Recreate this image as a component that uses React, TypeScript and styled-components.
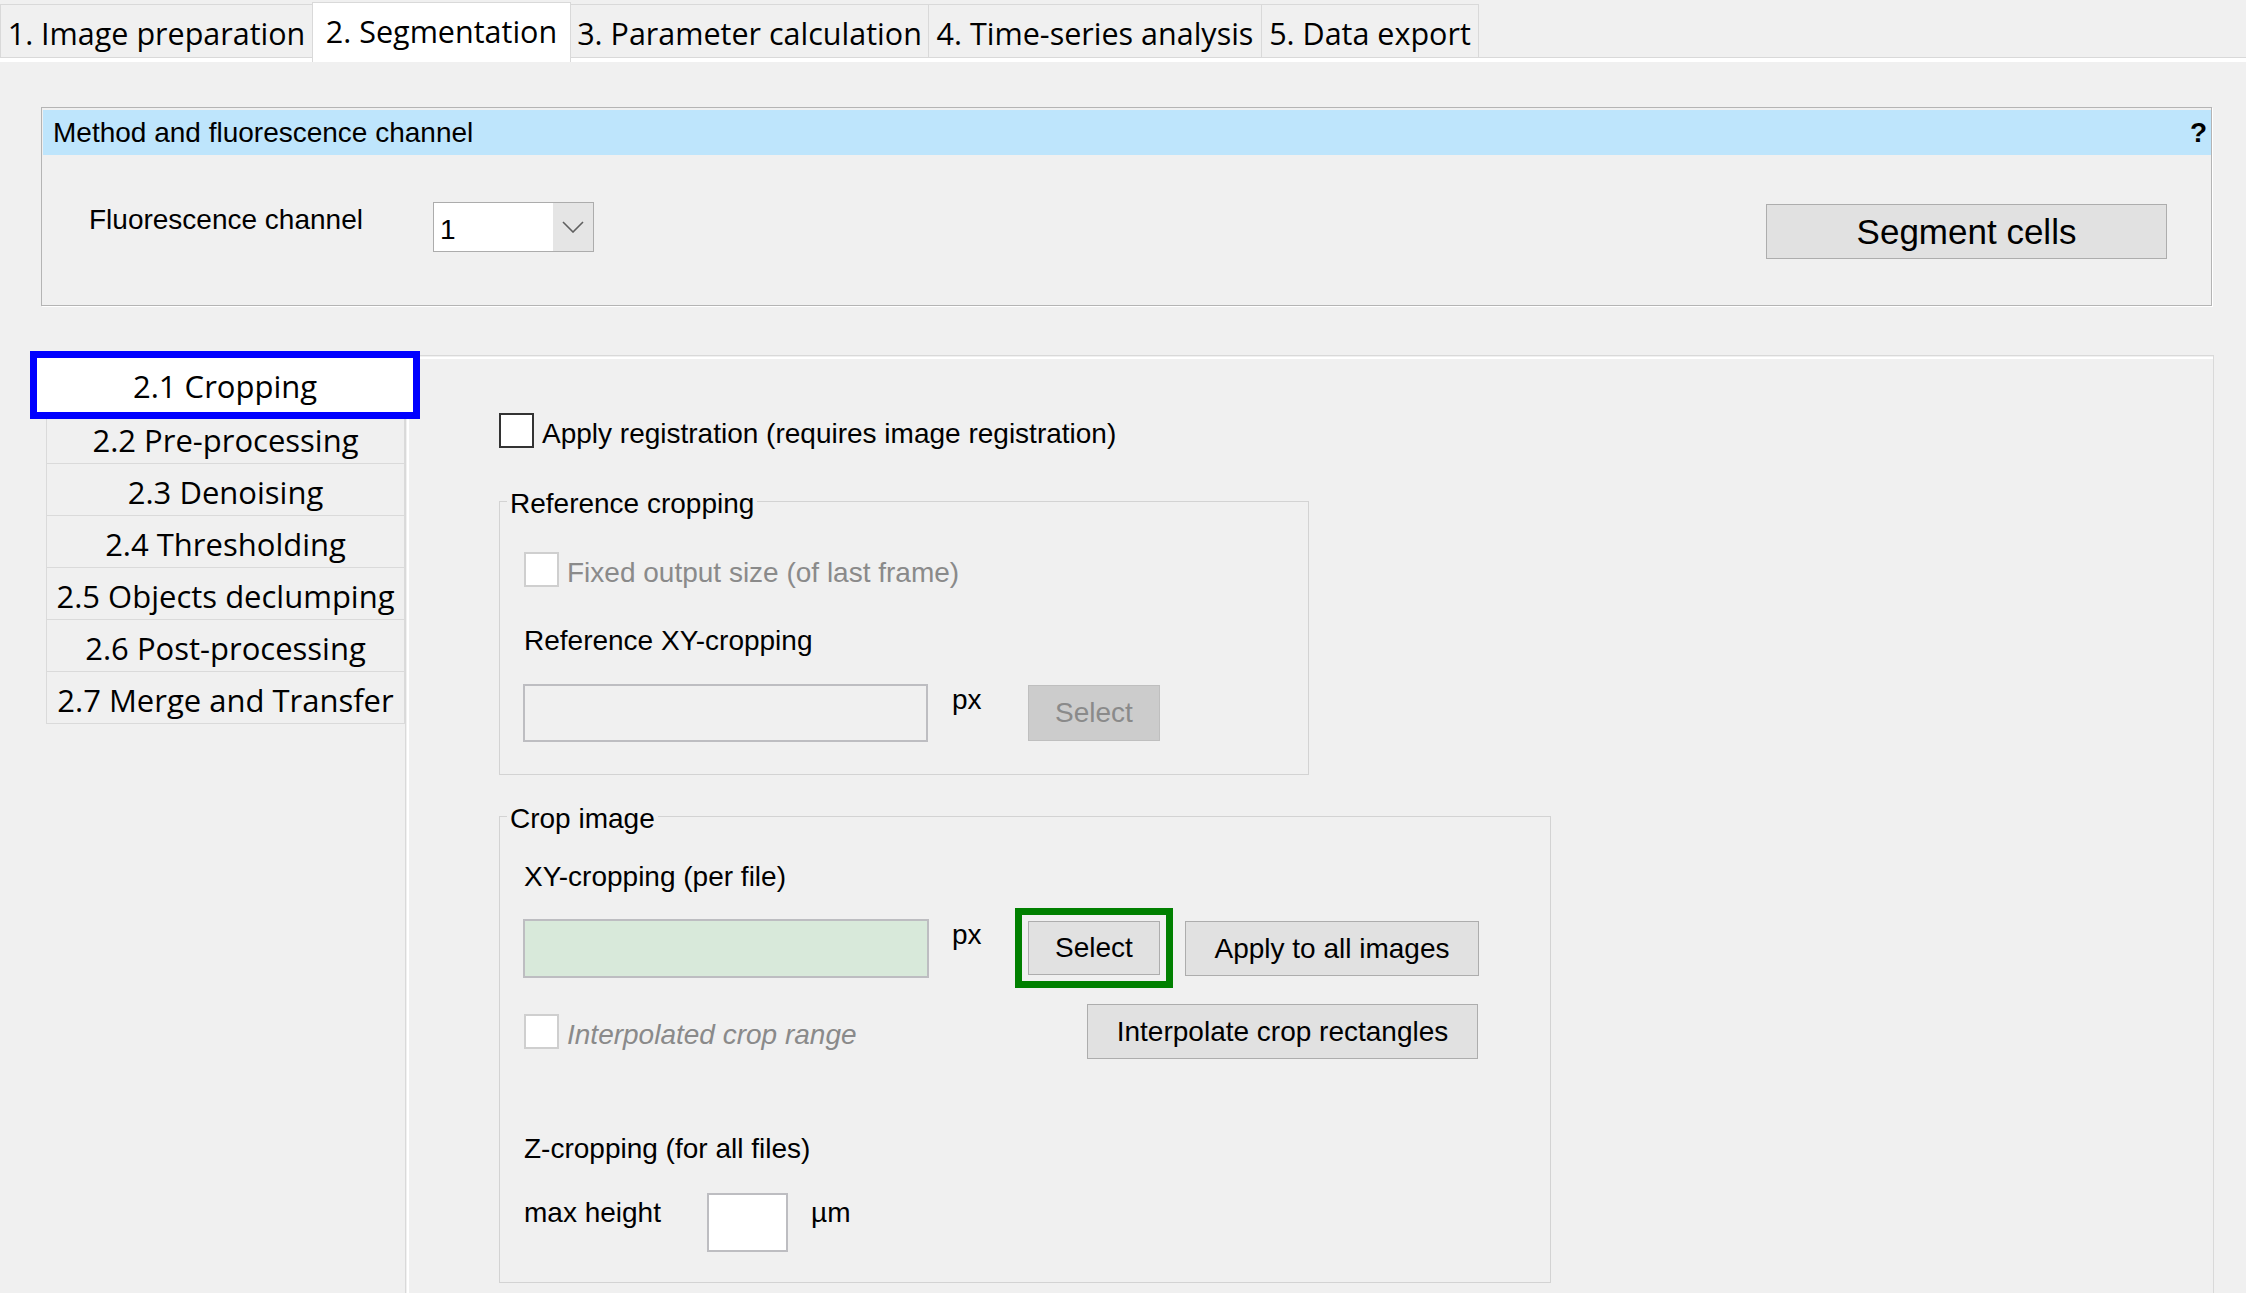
import React from "react";
import styled, { createGlobalStyle, css } from "styled-components";

const GlobalStyle = createGlobalStyle`
  html, body { margin: 0; padding: 0; background: #f0f0f0; }
  body {
    font-family: "Liberation Sans", Arial, sans-serif;
    color: #000;
    overflow: hidden;
  }
  * { box-sizing: border-box; }
`;

const Window = styled.div`
  display: flex;
  flex-direction: column;
  width: 100vw;
  height: 100vh;
  background: #f0f0f0;
  overflow: hidden;
`;

const TabBar = styled.div`
  display: flex;
  align-items: flex-start;
  height: 58px;
  flex-shrink: 0;
  border-bottom: 1px solid #d9d9d9;
`;

const Tab = styled.div<{ $active?: boolean; $w: number }>`
  width: ${(p) => p.$w}px;
  flex-shrink: 0;
  margin-right: -1px;
  font-family: "Open Sans", "Noto Sans", sans-serif;
  font-size: 30.5px;
  line-height: 40px;
  text-align: center;
  white-space: nowrap;
  border: 1px solid #d9d9d9;
  border-bottom: none;
  ${(p) =>
    p.$active
      ? css`
          position: relative;
          z-index: 1;
          margin-top: 2px;
          height: 60px;
          padding-top: 8px;
          background: #ffffff;
        `
      : css`
          margin-top: 4px;
          height: 53px;
          padding-top: 8px;
          background: #f0f0f0;
        `}
`;

const PageArea = styled.div`
  flex: 1;
  min-height: 0;
  display: flex;
  flex-direction: column;
  border-top: 4px solid #ffffff;
  padding: 45px 32px 0 41px;
`;

const MethodPanel = styled.section`
  flex-shrink: 0;
  margin-right: 2px;
  border: 1px solid #b4b4b4;
  padding: 2px 0 0 1px;
  box-shadow: 1px 1px 0 #ffffff;
  display: flex;
  flex-direction: column;
`;

const PanelHeader = styled.div`
  height: 45px;
  background: #bee5fc;
  display: flex;
  align-items: center;
  justify-content: space-between;
  padding: 0 4px 0 10px;
  font-size: 28px;
  line-height: 32px;
`;

const HelpMark = styled.span`
  font-weight: bold;
`;

const PanelBody = styled.div`
  height: 150px;
  display: flex;
  align-items: flex-start;
  padding: 0 44px 0 46px;
`;

const FieldLabel = styled.span<{ $w?: number; $top?: number }>`
  ${(p) => (p.$w ? `width: ${p.$w}px;` : "")}
  flex-shrink: 0;
  margin-top: ${(p) => p.$top ?? 0}px;
  font-size: 28px;
  line-height: 32px;
  white-space: nowrap;
`;

const Dropdown = styled.div`
  width: 161px;
  height: 50px;
  margin-top: 47px;
  display: flex;
  border: 1px solid #acacac;
  background: #ffffff;
`;

const DropdownValue = styled.span`
  flex: 1;
  padding: 11px 0 0 6px;
  font-size: 28px;
  line-height: 32px;
`;

const DropdownArrow = styled.span`
  width: 40px;
  display: flex;
  align-items: center;
  justify-content: center;
  background: #e5e5e5;
`;

const PushButton = styled.button<{
  $w: number;
  $h: number;
  $size?: number;
  $top?: number;
  $gap?: number;
  $auto?: boolean;
  $highlight?: boolean;
}>`
  width: ${(p) => p.$w}px;
  height: ${(p) => p.$h}px;
  flex-shrink: 0;
  margin-top: ${(p) => p.$top ?? 0}px;
  margin-left: ${(p) => (p.$auto ? "auto" : `${p.$gap ?? 0}px`)};
  padding: 0;
  font-family: "Liberation Sans", Arial, sans-serif;
  font-size: ${(p) => p.$size ?? 28}px;
  line-height: 1;
  color: #000000;
  background: #e1e1e1;
  border: 1px solid #adadad;
  white-space: nowrap;
  ${(p) =>
    p.$highlight &&
    css`
      outline: 7px solid #008000;
      outline-offset: 6px;
    `}
  &:disabled {
    color: #8a8a8a;
    background: #cccccc;
    border-color: #bfbfbf;
  }
`;

const Workspace = styled.div`
  flex: 1;
  min-height: 0;
  display: flex;
  margin-top: 49px;
`;

const SideList = styled.nav`
  width: 359px;
  flex-shrink: 0;
  margin-left: 5px;
  padding-top: 3px;
  display: flex;
  flex-direction: column;
  align-items: stretch;
`;

const SideItem = styled.div<{ $selected?: boolean }>`
  display: flex;
  align-items: center;
  justify-content: center;
  font-family: "Open Sans", "Noto Sans", sans-serif;
  font-size: 31px;
  line-height: 40px;
  white-space: nowrap;
  ${(p) =>
    p.$selected
      ? css`
          position: relative;
          z-index: 1;
          height: 54px;
          margin: 0 -8px 0 -9px;
          padding-top: 2px;
          background: #ffffff;
          outline: 7px solid #0000ff;
        `
      : css`
          height: 52px;
          padding-top: 5px;
          border: 1px solid #dadada;
          border-top: none;
        `}
`;

const ContentPanel = styled.div`
  flex: 1;
  display: flex;
  flex-direction: column;
  align-items: flex-start;
  border: 1px solid #d9d9d9;
  border-bottom: none;
  box-shadow: inset 1px 1px 0 #f0f0f0, inset 3px 3px 0 #ffffff;
  padding: 57px 0 0 93px;
`;

const CheckRow = styled.label`
  display: flex;
  align-items: center;
  height: 35px;
  flex-shrink: 0;
`;

const CheckBox = styled.span<{ $disabled?: boolean }>`
  width: 35px;
  height: 35px;
  flex-shrink: 0;
  background: #ffffff;
  border: 2px solid ${(p) => (p.$disabled ? "#cfcfcf" : "#333333")};
`;

const CheckText = styled.span<{ $disabled?: boolean; $italic?: boolean }>`
  margin-left: 8px;
  padding-top: 6px;
  font-size: 28px;
  line-height: 32px;
  white-space: nowrap;
  color: ${(p) => (p.$disabled ? "#8a8a8a" : "#000000")};
  font-style: ${(p) => (p.$italic ? "italic" : "normal")};
`;

const GroupBox = styled.fieldset<{ $w: number; $top: number }>`
  width: ${(p) => p.$w}px;
  min-width: 0;
  flex-shrink: 0;
  margin: ${(p) => p.$top}px 0 0 0;
  padding: 0;
  border: 1px solid #d3d3d3;
`;

const GroupLegend = styled.legend`
  margin-left: 7px;
  padding: 6px 3px 0;
  font-size: 28px;
  line-height: 32px;
`;

const GroupBody = styled.div<{ $pt: number; $pb: number; $pr?: number }>`
  display: flex;
  flex-direction: column;
  align-items: flex-start;
  padding: ${(p) => p.$pt}px ${(p) => p.$pr ?? 0}px ${(p) => p.$pb}px 24px;
`;

const Row = styled.div<{ $top: number; $spread?: boolean; $center?: boolean }>`
  display: flex;
  align-items: ${(p) => (p.$center ? "center" : "flex-start")};
  justify-content: ${(p) => (p.$spread ? "space-between" : "flex-start")};
  align-self: ${(p) => (p.$spread ? "stretch" : "auto")};
  margin-top: ${(p) => p.$top}px;
`;

const TextBox = styled.input<{ $w: number; $h: number; $bg: string; $shift?: number }>`
  width: ${(p) => p.$w}px;
  height: ${(p) => p.$h}px;
  flex-shrink: 0;
  margin: 0 0 0 ${(p) => p.$shift ?? 0}px;
  padding: 0 6px;
  font-family: "Liberation Sans", Arial, sans-serif;
  font-size: 28px;
  background: ${(p) => p.$bg};
  border: 2px solid #bdbdc1;
  outline: none;
`;

const Unit = styled.span<{ $w?: number; $gap: number; $top?: number }>`
  ${(p) => (p.$w ? `width: ${p.$w}px;` : "")}
  flex-shrink: 0;
  margin-left: ${(p) => p.$gap}px;
  margin-top: ${(p) => p.$top ?? 0}px;
  font-size: 28px;
  line-height: 32px;
`;

const Chevron = () => (
  <svg width="22" height="12" viewBox="0 0 22 12" fill="none">
    <polyline points="1,1 11,11 21,1" stroke="#5f5f5f" strokeWidth="1.6" />
  </svg>
);

const tabs = [
  { label: "1. Image preparation", w: 313 },
  { label: "2. Segmentation", w: 259, active: true },
  { label: "3. Parameter calculation", w: 359 },
  { label: "4. Time-series analysis", w: 334 },
  { label: "5. Data export", w: 218 },
];

const steps = [
  "2.1 Cropping",
  "2.2 Pre-processing",
  "2.3 Denoising",
  "2.4 Thresholding",
  "2.5 Objects declumping",
  "2.6 Post-processing",
  "2.7 Merge and Transfer",
];

export default function App() {
  return (
    <>
      <GlobalStyle />
      <Window>
        <TabBar>
          {tabs.map((t) => (
            <Tab key={t.label} $w={t.w} $active={t.active}>
              {t.label}
            </Tab>
          ))}
        </TabBar>
        <PageArea>
          <MethodPanel>
            <PanelHeader>
              <span>Method and fluorescence channel</span>
              <HelpMark>?</HelpMark>
            </PanelHeader>
            <PanelBody>
              <FieldLabel $w={344} $top={49}>
                Fluorescence channel
              </FieldLabel>
              <Dropdown>
                <DropdownValue>1</DropdownValue>
                <DropdownArrow>
                  <Chevron />
                </DropdownArrow>
              </Dropdown>
              <PushButton $w={401} $h={55} $size={35} $top={49} $auto>
                Segment cells
              </PushButton>
            </PanelBody>
          </MethodPanel>

          <Workspace>
            <SideList>
              {steps.map((s, i) => (
                <SideItem key={s} $selected={i === 0}>
                  {s}
                </SideItem>
              ))}
            </SideList>

            <ContentPanel>
              <CheckRow>
                <CheckBox />
                <CheckText>Apply registration (requires image registration)</CheckText>
              </CheckRow>

              <GroupBox $w={810} $top={34}>
                <GroupLegend>Reference cropping</GroupLegend>
                <GroupBody $pt={32} $pb={32}>
                  <CheckRow>
                    <CheckBox $disabled />
                    <CheckText $disabled>Fixed output size (of last frame)</CheckText>
                  </CheckRow>
                  <FieldLabel $top={38}>Reference XY-cropping</FieldLabel>
                  <Row $top={27}>
                    <TextBox $w={405} $h={58} $bg="#f0f0f0" $shift={-1} readOnly disabled />
                    <Unit $w={76} $gap={24}>
                      px
                    </Unit>
                    <PushButton $w={132} $h={56} $top={1} disabled>
                      Select
                    </PushButton>
                  </Row>
                </GroupBody>
              </GroupBox>

              <GroupBox $w={1052} $top={22}>
                <GroupLegend>Crop image</GroupLegend>
                <GroupBody $pt={26} $pb={30} $pr={72}>
                  <FieldLabel>XY-cropping (per file)</FieldLabel>
                  <Row $top={26}>
                    <TextBox $w={406} $h={59} $bg="#d8e9da" $shift={-1} readOnly />
                    <Unit $w={76} $gap={23}>
                      px
                    </Unit>
                    <PushButton $w={132} $h={54} $top={2} $highlight>
                      Select
                    </PushButton>
                    <PushButton $w={294} $h={55} $top={2} $gap={25}>
                      Apply to all images
                    </PushButton>
                  </Row>
                  <Row $top={26} $spread $center>
                    <CheckRow>
                      <CheckBox $disabled />
                      <CheckText $disabled $italic>
                        Interpolated crop range
                      </CheckText>
                    </CheckRow>
                    <PushButton $w={391} $h={55}>
                      Interpolate crop rectangles
                    </PushButton>
                  </Row>
                  <FieldLabel $top={74}>Z-cropping (for all files)</FieldLabel>
                  <Row $top={28}>
                    <FieldLabel $w={183} $top={4}>
                      max height
                    </FieldLabel>
                    <TextBox $w={81} $h={59} $bg="#ffffff" readOnly />
                    <Unit $gap={23} $top={4}>
                      µm
                    </Unit>
                  </Row>
                </GroupBody>
              </GroupBox>
            </ContentPanel>
          </Workspace>
        </PageArea>
      </Window>
    </>
  );
}
